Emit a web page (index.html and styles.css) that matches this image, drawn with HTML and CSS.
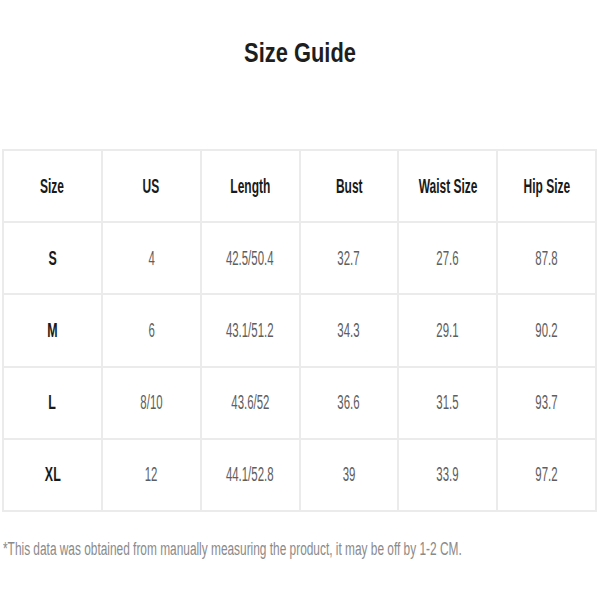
FILE: index.html
```html
<!DOCTYPE html>
<html>
<head>
<meta charset="utf-8">
<link rel="stylesheet" href="styles.css">
</head>
<body>
<div class="page">
  <h1 class="title"><span class="sq title-t">Size Guide</span></h1>
  <div class="grid">
    <div class="cell head"><span class="sq h">Size</span></div>
    <div class="cell head"><span class="sq h">US</span></div>
    <div class="cell head"><span class="sq h">Length</span></div>
    <div class="cell head"><span class="sq h">Bust</span></div>
    <div class="cell head"><span class="sq h">Waist Size</span></div>
    <div class="cell head"><span class="sq h">Hip Size</span></div>

    <div class="cell"><span class="sq k">S</span></div>
    <div class="cell"><span class="sq v">4</span></div>
    <div class="cell"><span class="sq v">42.5/50.4</span></div>
    <div class="cell"><span class="sq v">32.7</span></div>
    <div class="cell"><span class="sq v">27.6</span></div>
    <div class="cell"><span class="sq v">87.8</span></div>

    <div class="cell"><span class="sq k">M</span></div>
    <div class="cell"><span class="sq v">6</span></div>
    <div class="cell"><span class="sq v">43.1/51.2</span></div>
    <div class="cell"><span class="sq v">34.3</span></div>
    <div class="cell"><span class="sq v">29.1</span></div>
    <div class="cell"><span class="sq v">90.2</span></div>

    <div class="cell"><span class="sq k">L</span></div>
    <div class="cell"><span class="sq v">8/10</span></div>
    <div class="cell"><span class="sq v">43.6/52</span></div>
    <div class="cell"><span class="sq v">36.6</span></div>
    <div class="cell"><span class="sq v">31.5</span></div>
    <div class="cell"><span class="sq v">93.7</span></div>

    <div class="cell"><span class="sq k">XL</span></div>
    <div class="cell"><span class="sq v">12</span></div>
    <div class="cell"><span class="sq v">44.1/52.8</span></div>
    <div class="cell"><span class="sq v">39</span></div>
    <div class="cell"><span class="sq v">33.9</span></div>
    <div class="cell"><span class="sq v">97.2</span></div>
  </div>
  <p class="note"><span class="sq n">*This data was obtained from manually measuring the product, it may be off by 1-2 CM.</span></p>
</div>
</body>
</html>
```
FILE: styles.css
```css
html, body {
  margin: 0;
  padding: 0;
  background: #ffffff;
}
.page {
  width: 600px;
  height: 600px;
  box-sizing: border-box;
  padding-top: 37px;
  overflow: hidden;
  font-family: "Liberation Sans", Arial, sans-serif;
}
.sq {
  display: inline-block;
  white-space: nowrap;
  transform-origin: center center;
}
.title {
  margin: 0 0 80px 0;
  height: 32px;
  line-height: 32px;
  text-align: center;
  font-size: 27px;
  font-weight: bold;
  color: #1e1e1e;
}
.title-t { transform: scaleX(0.81); }
.grid {
  margin-left: 2px;
  width: 595px;
  display: grid;
  grid-template-columns: repeat(6, 1fr);
  grid-auto-rows: 72.2px;
  border-top: 2px solid #ebebeb;
  border-left: 2px solid #ebebeb;
  box-sizing: border-box;
}
.cell {
  box-sizing: border-box;
  border-right: 2px solid #ebebeb;
  border-bottom: 2px solid #ebebeb;
  display: flex;
  align-items: center;
  justify-content: center;
  overflow: hidden;
}
.h {
  font-size: 20px;
  font-weight: bold;
  color: #1a1a1a;
  transform: scaleX(0.6);
}
.k {
  font-size: 20px;
  font-weight: bold;
  color: #1a1a1a;
  transform: scaleX(0.62);
}
.v {
  font-size: 20px;
  color: #5e5e5e;
  transform: scaleX(0.57);
}
.note {
  margin: 27px 0 0 0;
  height: 20px;
  line-height: 20px;
  font-size: 18px;
  color: #8a8a8a;
  padding-left: 3px;
  overflow: hidden;
}
.n {
  transform-origin: left center;
  transform: scaleX(0.66);
}
```
